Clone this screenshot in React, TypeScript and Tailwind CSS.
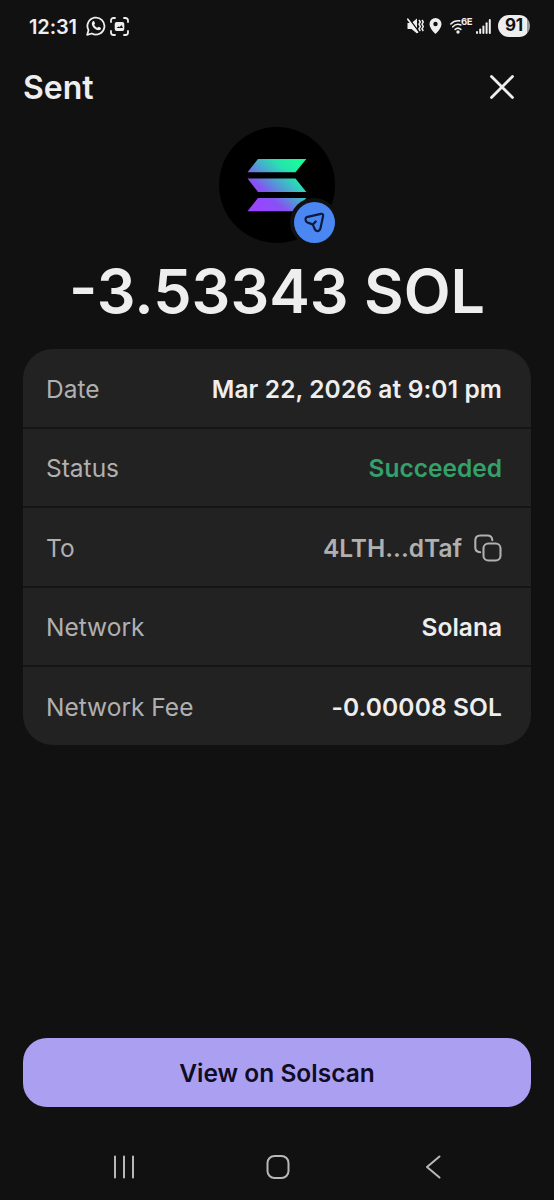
import { ReactNode } from 'react'

type Row = {
  label: string
  value: ReactNode
  tone: string
}

const rows: Row[] = [
  { label: 'Date', value: 'Mar 22, 2026 at 9:01 pm', tone: 'text-[#eeeeee] tracking-[0.12px]' },
  { label: 'Status', value: 'Succeeded', tone: 'text-[#34a06a]' },
  {
    label: 'To',
    value: (
      <>
        4LTH...dTaf
        <CopyIcon />
      </>
    ),
    tone: 'text-[#b0b0b0]',
  },
  { label: 'Network', value: 'Solana', tone: 'text-[#eeeeee]' },
  { label: 'Network Fee', value: '-0.00008 SOL', tone: 'text-[#eeeeee] tracking-[0.12px]' },
]

function CopyIcon() {
  return (
    <svg className="ml-3 h-7 w-7" viewBox="0 0 28 28" fill="none" stroke="currentColor" strokeWidth="2.1">
      <rect x="9.5" y="9.5" width="17" height="17" rx="4.8" />
      <path d="M6.2 18.2C3 18 1.3 16.500 1.3 13.500V6.500C1.3 3.200 3 1.500 6.200 1.500h7.300c3 0 4.600 1.500 4.800 4.600" strokeLinecap="round" />
    </svg>
  )
}

function StatusBar() {
  return (
    <div className="flex h-[52px] items-center justify-between pl-[29px] pr-[24px] text-[#eeeeee]">
      <div className="flex items-center">
        <span className="w-[49px] whitespace-nowrap pt-px text-[20px] font-semibold leading-6 tracking-[-0.1px]">12:31</span>
        {/* WhatsApp */}
        <svg className="ml-[8px] h-5 w-5" viewBox="0 0 20 20" fill="none">
          <path d="M1.2 18.8l1.3-4.6A8.5 8.5 0 1 1 5.8 17.5z" stroke="currentColor" strokeWidth="1.8" strokeLinejoin="round" />
          <path d="M6.9 5.2c.5-.4 1-.3 1.3.2l.8 1.8c.2.5-.7 1.2-.8 1.5.5 1.3 1.6 2.3 3.1 3 .5-.1 1-1.1 1.5-1l1.9 1c.6.4.2 1.4-.4 2-2.3 1.8-8.6-1.7-8.5-6.2 0-.9.4-1.7 1.1-2.3z" fill="currentColor" />
        </svg>
        {/* Screen capture */}
        <svg className="ml-[4px] h-[19px] w-[19px]" viewBox="0 0 19 19" fill="none">
          <path d="M1 5V3.5A2.500 2.500 0 0 1 3.500 1H5M14 1h1.500A2.500 2.500 0 0 1 18 3.500V5M18 14v1.500a2.500 2.500 0 0 1-2.500 2.500H14M5 18H3.500A2.500 2.500 0 0 1 1 15.500V14" stroke="currentColor" strokeWidth="1.8" strokeLinecap="round" />
          <rect x="4.700" y="5" width="9.600" height="9" rx="2" fill="currentColor" />
          <path d="M6.500 11l2-1.500 1.300.500 1.700-2 1.500 3z" fill="#111111" />
        </svg>
      </div>
      <div className="flex items-center">
        {/* Muted */}
        <svg className="h-4 w-[17px]" viewBox="0 0 17 16" fill="none">
          <path d="M.5 5h4L10 .5v15L4.500 11h-4z" fill="currentColor" />
          <path d="M2 .500l9.500 13" stroke="#111111" strokeWidth="1.500" />
          <path d="M.8 1.200l9.700 13" stroke="currentColor" strokeWidth="1.700" strokeLinecap="round" />
          <path d="M12 2l1.300 2L12 6.200l1.300 2.300L12 10.800l1.300 2.200M15 2l1.300 2L15 6.200l1.300 2.300L15 10.800l1.300 2.200" stroke="currentColor" strokeWidth="1.500" />
        </svg>
        <svg className="ml-[5px] h-4 w-[13px]" viewBox="0 0 12 16">
          <path fillRule="evenodd" d="M6 0a6 6 0 0 1 6 6c0 3.500-3.500 7.500-6 10C3.500 13.500 0 9.500 0 6a6 6 0 0 1 6-6zm0 3.800a2.200 2.200 0 1 0 0 4.400 2.200 2.200 0 0 0 0-4.400z" fill="currentColor" />
        </svg>
        {/* Wi-Fi 6E */}
        <div className="relative ml-[8px] h-[15px] w-[22px]">
          <svg className="h-[15px] w-[16px]" viewBox="0 0 16 15" fill="none" stroke="currentColor" strokeWidth="1.600" strokeLinecap="round">
            <path d="M.8 5C3.500 2.200 6.500 1.400 9.700 1.900M2.800 7.800c2.300-2.500 5.300-3 8-1.800M5.200 10.400c1.600-1.500 4-1.500 5.600 0" />
            <circle cx="8" cy="13" r=".9" fill="currentColor" />
          </svg>
          <span className="absolute left-[11px] top-[-2px] text-[9.5px] font-bold leading-[10px] tracking-[-0.4px]">6E</span>
        </div>
        <svg className="ml-[4px] h-[15px] w-[15px]" viewBox="0 0 15 15" fill="currentColor">
          <rect x="0" y="12" width="2" height="3" rx="1" />
          <rect x="3.200" y="9.500" width="2" height="5.500" rx="1" />
          <rect x="6.400" y="6.500" width="2" height="8.500" rx="1" />
          <rect x="9.600" y="3.300" width="2" height="11.700" rx="1" />
          <rect x="12.800" y="0" width="2" height="15" rx="1" />
        </svg>
        <div className="ml-[7px] flex h-[22px] w-8 items-center justify-center rounded-full bg-gradient-to-r from-[#eeeeee] from-90% to-[#9a9a9a] to-90% text-[17px] font-bold tracking-[-0.3px] text-[#111111]">
          91
        </div>
      </div>
    </div>
  )
}

function TokenLogo() {
  return (
    <div className="relative mx-auto h-[116px] w-[116px] rounded-full bg-black">
      <svg className="h-[116px] w-[116px]" viewBox="0 0 116 116">
        <defs>
          <linearGradient id="solana" gradientUnits="userSpaceOnUse" x1="36" y1="83" x2="80" y2="34">
            <stop offset="0.08" stopColor="#9945ff" />
            <stop offset="0.3" stopColor="#8752f3" />
            <stop offset="0.5" stopColor="#5497d5" />
            <stop offset="0.6" stopColor="#43b4ca" />
            <stop offset="0.75" stopColor="#28e0b0" />
            <stop offset="0.97" stopColor="#19fb9b" />
          </linearGradient>
        </defs>
        <g fill="url(#solana)">
          <path d="M39 32h48.300L76.500 45.300H28.500z" />
          <path d="M28.500 51.500h48L87.300 65H39z" />
          <path d="M39 71h48.300L76.500 84.300H28.500z" />
        </g>
      </svg>
      <div className="absolute left-[71px] top-[71px] flex h-12 w-12 items-center justify-center rounded-full bg-[#111111]">
        <div className="flex h-[41px] w-[41px] items-center justify-center rounded-full bg-[#4a87f2]">
          <svg className="h-[21px] w-[21px]" viewBox="0 0 21 21" fill="none" stroke="#0d1a3a" strokeWidth="2.200" strokeLinecap="round" strokeLinejoin="round">
            <path d="M3.600 4.800L17 1.900c1.500-.300 2.400.6 2.100 2.100l-2.700 12.600c-.7 3-4.400 3.300-5.600.7l-1.500-3.700c-.3-.8-.7-1.200-1.500-1.500l-4.300-1.700C.8 9.200.9 5.500 3.600 4.800zM8.700 12.700l3-3.200" />
          </svg>
        </div>
      </div>
    </div>
  )
}

function NavBar() {
  return (
    <div className="mt-auto flex h-[66px] items-center pl-[112px] text-[#b8b8b8]">
      <svg className="h-6 w-6" viewBox="0 0 24 24" stroke="currentColor" strokeWidth="2" strokeLinecap="round">
        <path d="M3 1.500v21M12 1.500v21M21 1.500v21" />
      </svg>
      <svg className="ml-[130px] h-6 w-6" viewBox="0 0 24 24" fill="none" stroke="currentColor" strokeWidth="2">
        <rect x="1.500" y="1" width="21" height="22" rx="7" />
      </svg>
      <svg className="ml-[134px] h-6 w-[18px]" viewBox="0 0 18 24" fill="none" stroke="currentColor" strokeWidth="2" strokeLinecap="round" strokeLinejoin="round">
        <path d="M15.500 1.500L3 12l12.500 10.500" />
      </svg>
    </div>
  )
}

export default function App() {
  return (
    <div className="flex h-[1200px] w-[554px] flex-col overflow-hidden bg-[#111111] font-['Inter',sans-serif]">
      <StatusBar />

      <header className="flex h-[70px] items-center justify-between pl-[23px] pr-[39px] text-[#eeeeee]">
        <h1 className="pt-px text-[32px] font-semibold leading-10">Sent</h1>
        <svg className="h-[26px] w-[26px]" viewBox="0 0 26 26" stroke="currentColor" strokeWidth="2.800" strokeLinecap="round">
          <path d="M2.500 2.500l21 21M23.500 2.500l-21 21" />
        </svg>
      </header>

      <main className="flex flex-col px-[23px] pt-[5px]">
        <TokenLogo />
        <div className="mt-[12px] whitespace-nowrap text-center text-[61px] font-semibold leading-[72px] text-[#eeeeee]">
          -3.53343 SOL
        </div>

        <div className="mt-[22px] flex flex-col gap-[2px] overflow-hidden rounded-[30px] bg-[#151515]">
          {rows.map(row => (
            <div key={row.label} className="flex h-[77.5px] items-center justify-between bg-[#222222] pl-[23px] pr-[29px] pt-[3px] text-[24.5px]">
              <span className="text-[#b0b0b0]">{row.label}</span>
              <span className={`flex items-center whitespace-nowrap font-semibold ${row.tone}`}>{row.value}</span>
            </div>
          ))}
        </div>

        <button className="mt-[293px] h-[69px] rounded-[24px] bg-[#ab9ff2] pt-[3px] text-[24.5px] font-semibold text-[#100c24]">
          View on Solscan
        </button>
      </main>

      <NavBar />
    </div>
  )
}
